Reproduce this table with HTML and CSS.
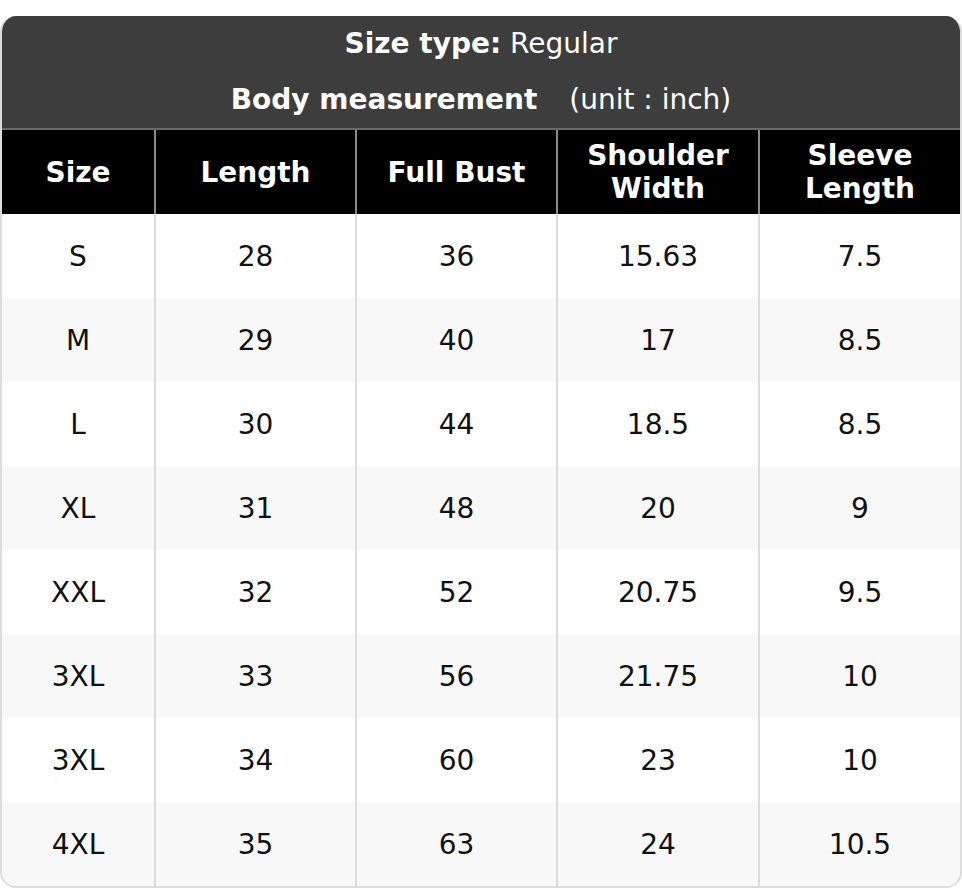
FILE: index.html
```html
<!DOCTYPE html>
<html>
<head>
<meta charset="utf-8">
<link rel="stylesheet" href="styles.css">
</head>
<body>
<div class="chart">
  <div class="title">
    <div class="line"><b>Size type:</b> Regular</div>
    <div class="line"><b>Body measurement</b><span class="unit">(unit : inch)</span></div>
  </div>
  <table>
    <colgroup>
      <col class="c1"><col class="c2"><col class="c3"><col class="c4"><col class="c5">
    </colgroup>
    <thead>
      <tr><th>Size</th><th>Length</th><th>Full Bust</th><th>Shoulder<br>Width</th><th>Sleeve<br>Length</th></tr>
    </thead>
    <tbody>
      <tr><td>S</td><td>28</td><td>36</td><td>15.63</td><td>7.5</td></tr>
      <tr><td>M</td><td>29</td><td>40</td><td>17</td><td>8.5</td></tr>
      <tr><td>L</td><td>30</td><td>44</td><td>18.5</td><td>8.5</td></tr>
      <tr><td>XL</td><td>31</td><td>48</td><td>20</td><td>9</td></tr>
      <tr><td>XXL</td><td>32</td><td>52</td><td>20.75</td><td>9.5</td></tr>
      <tr><td>3XL</td><td>33</td><td>56</td><td>21.75</td><td>10</td></tr>
      <tr><td>3XL</td><td>34</td><td>60</td><td>23</td><td>10</td></tr>
      <tr><td>4XL</td><td>35</td><td>63</td><td>24</td><td>10.5</td></tr>
    </tbody>
  </table>
</div>
</body>
</html>
```
FILE: styles.css
```css
html, body {
  margin: 0;
  padding: 0;
  background: #fff;
}
body {
  font-family: "DejaVu Sans", sans-serif;
  padding-top: 16px;
}
.chart {
  width: 962px;
  border-radius: 16px;
  overflow: hidden;
  border: 2px solid #dcdcdc;
  border-top: none;
  box-sizing: border-box;
  background: #fff;
}
.title {
  background: #3d3d3d;
  color: #fff;
  text-align: center;
  font-size: 28px;
  padding: 0;
  height: 112px;
  display: flex;
  flex-direction: column;
  justify-content: center;
  border-bottom: 2px solid #6a6a6a;
  margin: 0 -2px;
}
.line {
  height: 56px;
  line-height: 55px;
}
.unit {
  margin-left: 32px;
}
table {
  width: 100%;
  border-collapse: collapse;
  table-layout: fixed;
}
col.c1 { width: 153px; }
col.c2 { width: 201px; }
col.c3 { width: 201px; }
col.c4 { width: 202px; }
col.c5 { width: auto; }
th {
  background: #000;
  color: #fff;
  font-size: 28px;
  font-weight: bold;
  height: 84px;
  padding: 0;
  line-height: 33px;
  border-left: 2px solid #8a8a8a;
}
th:first-child { border-left: none; }
td {
  text-align: center;
  font-size: 28px;
  color: #111;
  height: 84px;
  padding: 0;
  border-left: 2px solid #dcdcdc;
}
td:first-child { border-left: none; }
tbody tr:nth-child(even) td {
  background: #f8f8f8;
}
```
